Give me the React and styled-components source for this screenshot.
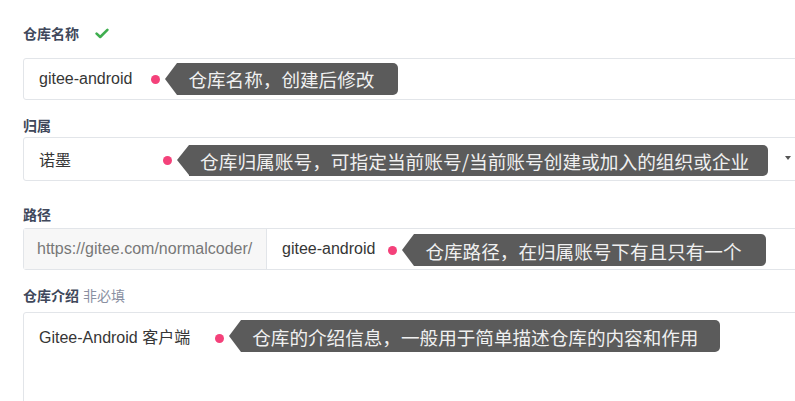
import React from "react";
import styled, { createGlobalStyle } from "styled-components";

const Global = createGlobalStyle`
  html, body { margin: 0; padding: 0; background: #fff; overflow: hidden; }
  body { font-family: "Liberation Sans", "Noto Sans CJK SC", sans-serif; }
`;

const Page = styled.div`
  width: 803px;
  height: 401px;
  overflow: hidden;
  padding: 23px 0 0 23px;
  box-sizing: border-box;
  display: flex;
  flex-direction: column;
`;

const Field = styled.div`
  display: flex;
  flex-direction: column;
  flex-shrink: 0;
  margin-top: ${(p) => p.$top || 0}px;
  gap: ${(p) => p.$gap || 0}px;
`;

const Label = styled.div`
  display: flex;
  align-items: center;
  height: 20px;
  font-size: 14px;
  font-weight: 700;
  color: #40485b;
  font-family: "Noto Sans CJK SC", "Liberation Sans", sans-serif;
`;

const Hint = styled.span`
  margin-left: 4px;
  font-weight: 400;
  color: #8a90a2;
`;

const Check = styled.svg`
  margin-left: 16px;
  width: 14px;
  height: 11px;
`;

const Box = styled.div`
  display: flex;
  flex-shrink: 0;
  align-items: ${(p) => (p.$top ? "flex-start" : "center")};
  height: ${(p) => p.$h}px;
  box-sizing: border-box;
  border: 1px solid #e2e5e9;
  border-radius: 3px;
  padding: ${(p) => (p.$top ? "7px 11px 0 15px" : "0 11px 0 15px")};
  background: #fff;
`;

const GroupBox = styled(Box)`
  padding: 0;
  align-items: stretch;
`;

const Prefix = styled.div`
  width: 243px;
  box-sizing: border-box;
  display: flex;
  align-items: center;
  padding-left: 13px;
  background: #f7f7f7;
  border-right: 1px solid #e2e5e9;
  color: #777;
  font-size: 16px;
`;

const Suffix = styled.div`
  display: flex;
  align-items: center;
  padding-left: 15px;
  flex: 1;
`;

const Row = styled.div`
  display: flex;
  align-items: center;
  height: 32px;
`;

const Value = styled.span`
  font-size: 16px;
  color: #363636;
  white-space: nowrap;
`;

const Dot = styled.span`
  width: 9px;
  height: 9px;
  border-radius: 50%;
  background: #f4417a;
  margin-left: ${(p) => p.$ml}px;
  margin-top: ${(p) => p.$dy || 0}px;
  flex-shrink: 0;
`;

const Tip = styled.div`
  position: relative;
  margin-left: 17px;
  margin-top: ${(p) => p.$dy || 0}px;
  height: ${(p) => p.$h || 32}px;
  display: flex;
  align-items: center;
  padding: 0 ${(p) => p.$pr || 22}px 0 11px;
  background: #5b5b5b;
  border-radius: 0 5px 5px 0;
  color: #f0f0f0;
  font-size: ${(p) => p.$fs || 18.6}px;
  font-family: "Noto Sans CJK SC", sans-serif;
  white-space: nowrap;
  &::before {
    content: "";
    position: absolute;
    left: -12px;
    top: 0;
    border-right: 12px solid #5b5b5b;
    border-top: ${(p) => (p.$h || 32) / 2}px solid transparent;
    border-bottom: ${(p) => (p.$h || 32) / 2}px solid transparent;
  }
`;

const Caret = styled.span`
  margin-left: auto;
  width: 0;
  height: 0;
  border-left: 3px solid transparent;
  border-right: 3px solid transparent;
  border-top: 4px solid #555;
  margin-top: -3px;
`;

const CN = styled.span`
  font-family: "Noto Sans CJK SC", sans-serif;
`;

export default function App() {
  return (
    <>
      <Global />
      <Page>
        <Field $gap={15}>
          <Label>
            仓库名称
            <Check viewBox="0 0 14 11">
              <polyline
                points="1.6,5.6 5.2,9 12.4,1.8"
                fill="none"
                stroke="#3fae4f"
                strokeWidth="2.6"
                strokeLinecap="round"
                strokeLinejoin="round"
              />
            </Check>
          </Label>
          <Box $h={42}>
            <Value>gitee-android</Value>
            <Dot $ml={19} />
            <Tip $dy={-1} $pr={24}>仓库名称，创建后修改</Tip>
          </Box>
        </Field>

        <Field $top={15} $gap={2}>
          <Label>归属</Label>
          <Box $h={44}>
            <Value>
              <CN>诺墨</CN>
            </Value>
            <Dot $ml={92} $dy={3} />
            <Tip $dy={3} $h={31} $fs={18.7} $pr={19}>
              仓库归属账号，可指定当前账号/当前账号创建或加入的组织或企业
            </Tip>
            <Caret />
          </Box>
        </Field>

        <Field $top={23} $gap={4}>
          <Label>路径</Label>
          <GroupBox $h={42}>
            <Prefix>https://gitee.com/normalcoder/</Prefix>
            <Suffix>
              <Value>gitee-android</Value>
              <Dot $ml={13} $dy={2} />
              <Tip $dy={2} $pr={24}>仓库路径，在归属账号下有且只有一个</Tip>
            </Suffix>
          </GroupBox>
        </Field>

        <Field $top={15} $gap={7}>
          <Label>
            仓库介绍<Hint>非必填</Hint>
          </Label>
          <Box $h={120} $top>
            <Row>
              <Value>
                Gitee-Android <CN>客户端</CN>
              </Value>
              <Dot $ml={25} $dy={4} />
              <Tip $dy={0}>仓库的介绍信息，一般用于简单描述仓库的内容和作用</Tip>
            </Row>
          </Box>
        </Field>
      </Page>
    </>
  );
}
